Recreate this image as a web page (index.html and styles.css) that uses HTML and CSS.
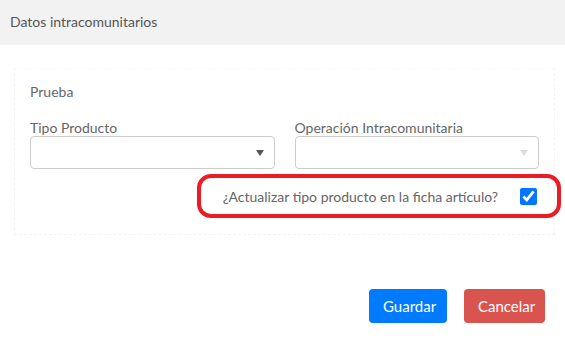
FILE: index.html
```html
<!DOCTYPE html>
<html>
  <head>
    <meta charset="UTF-8">
    <title>Datos intracomunitarios</title>
    <link rel="stylesheet" href="styles.css">
  </head>
  <body>
    <header class="modal-header">
      <h1>Datos intracomunitarios</h1>
    </header>
    <div class="modal-body">
      <div class="card">
        <p class="card-title">Prueba</p>
        <div class="fields">
          <div class="field">
            <label>Tipo Producto</label>
            <div class="select"><span class="caret"></span></div>
          </div>
          <div class="field">
            <label>Operación Intracomunitaria</label>
            <div class="select disabled"><span class="caret"></span></div>
          </div>
        </div>
        <div class="check-row">
          <div class="highlight">
            <span>¿Actualizar tipo producto en la ficha artículo?</span>
            <input type="checkbox" checked>
          </div>
        </div>
      </div>
    </div>
    <footer class="modal-footer">
      <button class="btn btn-save">Guardar</button>
      <button class="btn btn-cancel">Cancelar</button>
    </footer>
  </body>
</html>
```
FILE: styles.css
```css
*{
  box-sizing: border-box;
  padding: 0;
  margin: 0;
}
body{
  width: 565px;
  height: 340px;
  background: #fff;
  font-family: 'Lato', 'Noto Sans', sans-serif;
  color: #666;
  overflow: hidden;
}
.modal-header{
  height: 45px;
  background: #f2f2f2;
  display: flex;
  align-items: center;
  padding-left: 10px;
  padding-bottom: 2px;
}
.modal-header h1{
  font-size: 14px;
  font-weight: 400;
  color: #555;
}
.modal-body{
  padding: 23px 10px 0 14px;
}
.card{
  border: 1px dashed #f4f4f4;
  border-top-color: #fafafa;
  padding: 15px 15px 16px 15px;
}
.card-title{
  font-size: 14px;
  line-height: 16px;
}
.fields{
  display: flex;
  gap: 20px;
  margin-top: 19px;
}
.field{
  flex: 1;
}
.field label{
  display: block;
  font-size: 14px;
  line-height: 17px;
  color: #666;
}
.select{
  position: relative;
  height: 33px;
  border: 1px solid #ccc;
  border-radius: 4px;
}
.caret{
  position: absolute;
  right: 10px;
  top: 13px;
  border-left: 4.5px solid transparent;
  border-right: 4.5px solid transparent;
  border-top: 6px solid #555;
}
.select.disabled .caret{
  border-top-color: #ddd;
}
.check-row{
  display: flex;
  justify-content: flex-end;
  margin-top: 5px;
  margin-right: -22px;
}
.highlight{
  display: flex;
  align-items: center;
  height: 44px;
  border: 4px solid #ec1c24;
  border-radius: 14px;
  padding: 0 20px 0 22px;
  font-size: 14px;
  color: #666;
}
.highlight input{
  width: 17px;
  height: 17px;
  margin: 0 0 0 22px;
  accent-color: #0075ff;
}
.modal-footer{
  display: flex;
  justify-content: flex-end;
  gap: 17px;
  padding: 54px 20px 0 0;
}
.btn{
  height: 34px;
  border: none;
  border-radius: 4px;
  color: #fff;
  font-family: 'Lato', 'Noto Sans', sans-serif;
  font-size: 15px;
  padding: 0 14px;
}
.btn-save{
  width: 78px;
  background: #007bff;
}
.btn-cancel{
  width: 81px;
  background: #d9534f;
}
```
